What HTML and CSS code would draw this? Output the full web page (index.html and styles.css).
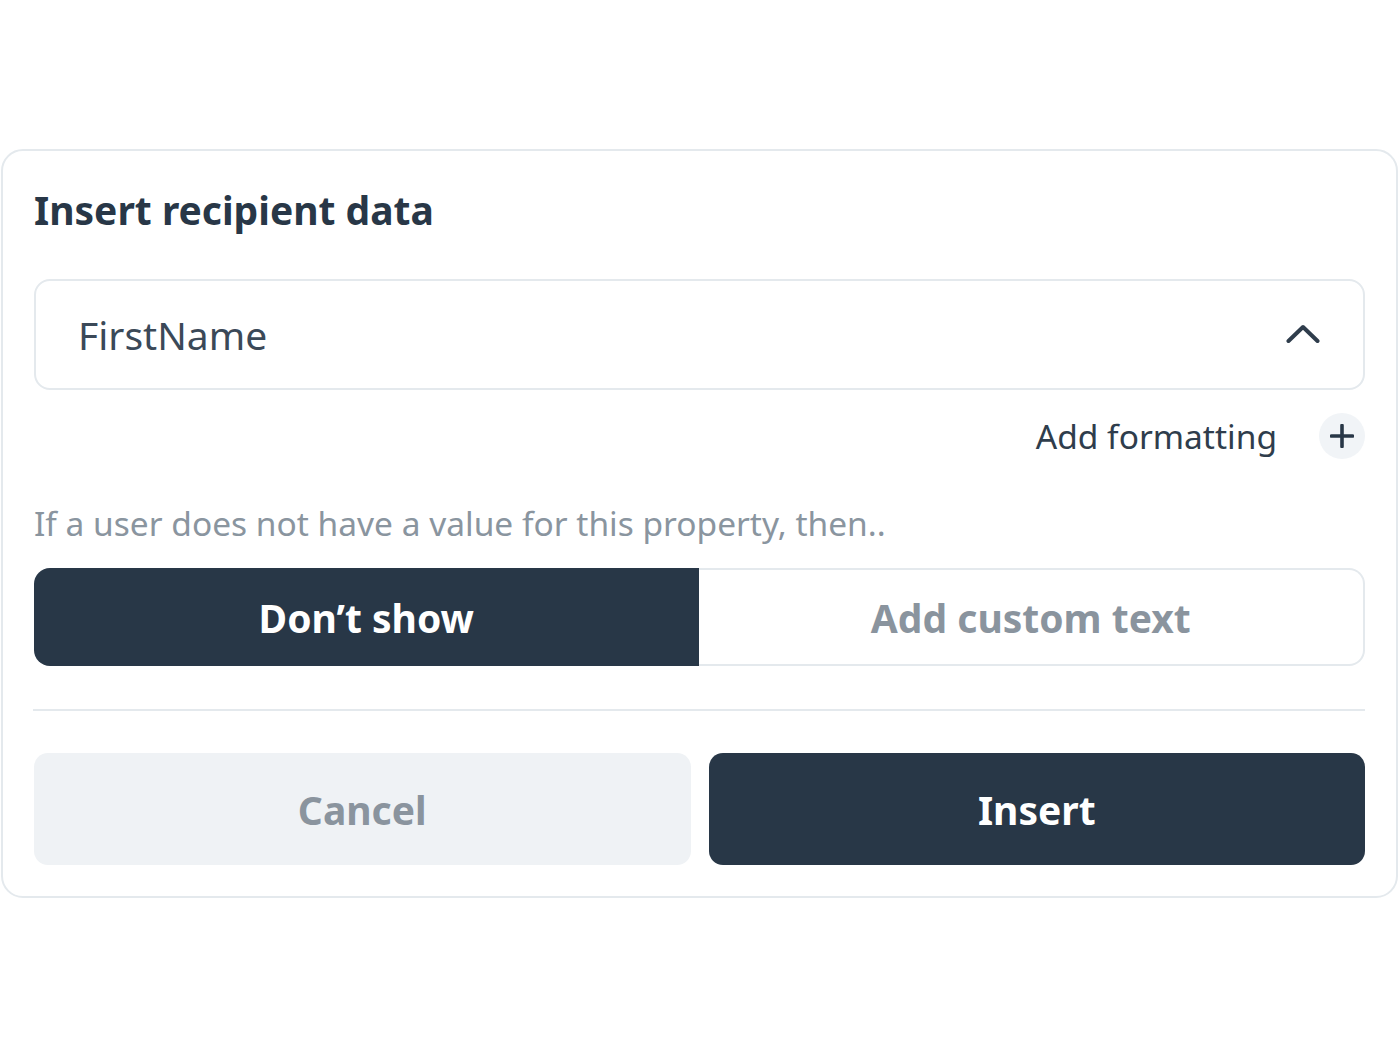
FILE: index.html
```html
<!DOCTYPE html>
<html>
<head>
<meta charset="utf-8">
<link rel="stylesheet" href="styles.css">
</head>
<body>
<div class="card">
  <h1 class="title">Insert recipient data</h1>
  <div class="select">
    <span class="select-value">FirstName</span>
    <svg class="chevron" width="34" height="20" viewBox="0 0 34 20"><polyline points="2.5,17 17,3 31.5,17" fill="none" stroke="#2f3d4c" stroke-width="4" stroke-linecap="round" stroke-linejoin="round"/></svg>
  </div>
  <div class="format-row">
    <span class="format-label">Add formatting</span>
    <span class="plus-btn"><svg width="24" height="24" viewBox="0 0 24 24"><path d="M12 1.5v21M1.5 12h21" stroke="#283747" stroke-width="3.6" stroke-linecap="round"/></svg></span>
  </div>
  <p class="helper">If a user does not have a value for this property, then..</p>
  <div class="segmented">
    <div class="seg seg-active">Don’t show</div>
    <div class="seg seg-inactive">Add custom text</div>
  </div>
  <div class="divider"></div>
  <div class="actions">
    <div class="btn btn-cancel">Cancel</div>
    <div class="btn btn-insert">Insert</div>
  </div>
</div>
</body>
</html>
```
FILE: styles.css
```css
* { box-sizing: border-box; }
html, body { margin: 0; padding: 0; background: #ffffff; }
body {
  font-family: "Noto Sans", "Open Sans", sans-serif;
  color: #283747;
  padding-top: 149px;
  padding-left: 1px;
}
.card {
  width: 1397px;
  height: 749px;
  border: 2px solid #e4e9ed;
  border-radius: 22px;
  padding: 35px 31px 0 31px;
  display: flex;
  flex-direction: column;
}
.title {
  margin: 0;
  font-size: 39px;
  line-height: 48px;
  font-weight: 700;
  color: #283747;
}
.select {
  margin-top: 45px;
  height: 111px;
  border: 2px solid #e4e9ed;
  border-radius: 16px;
  display: flex;
  align-items: center;
  justify-content: space-between;
  padding: 0 43px 0 42px;
}
.select-value {
  font-size: 39px;
  color: #3b4958;
}
.chevron { display: block; margin-top: -2px; }
.format-row {
  margin-top: 23px;
  display: flex;
  justify-content: flex-end;
  align-items: center;
  gap: 42px;
}
.format-label {
  font-size: 33.5px;
  color: #2f3d4c;
}
.plus-btn {
  width: 46px;
  height: 46px;
  border-radius: 50%;
  background: #f1f4f7;
  display: flex;
  align-items: center;
  justify-content: center;
}
.plus-btn svg { display: block; }
.helper {
  margin: 43px 0 0;
  font-size: 33.5px;
  line-height: 42px;
  color: #8a959f;
}
.segmented {
  margin-top: 24px;
  height: 98px;
  display: flex;
}
.seg {
  flex: 1;
  display: flex;
  align-items: center;
  justify-content: center;
  font-size: 39px;
  font-weight: 700;
}
.seg-active {
  background: #283747;
  color: #ffffff;
  border-radius: 16px 0 0 16px;
}
.seg-inactive {
  background: #ffffff;
  color: #8a949e;
  border: 2px solid #e4e9ed;
  border-left: none;
  border-radius: 0 16px 16px 0;
}
.divider {
  margin-top: 43px;
  height: 2px;
  background: #e4e9ed;
  margin-left: -1px;
}
.actions {
  margin-top: 42px;
  display: flex;
  gap: 18px;
}
.btn {
  flex: 1;
  height: 112px;
  border-radius: 14px;
  display: flex;
  align-items: center;
  justify-content: center;
  font-size: 39px;
  font-weight: 700;
}
.btn-cancel {
  background: #eff2f5;
  color: #8a949e;
}
.btn-insert {
  background: #283747;
  color: #ffffff;
}
```
